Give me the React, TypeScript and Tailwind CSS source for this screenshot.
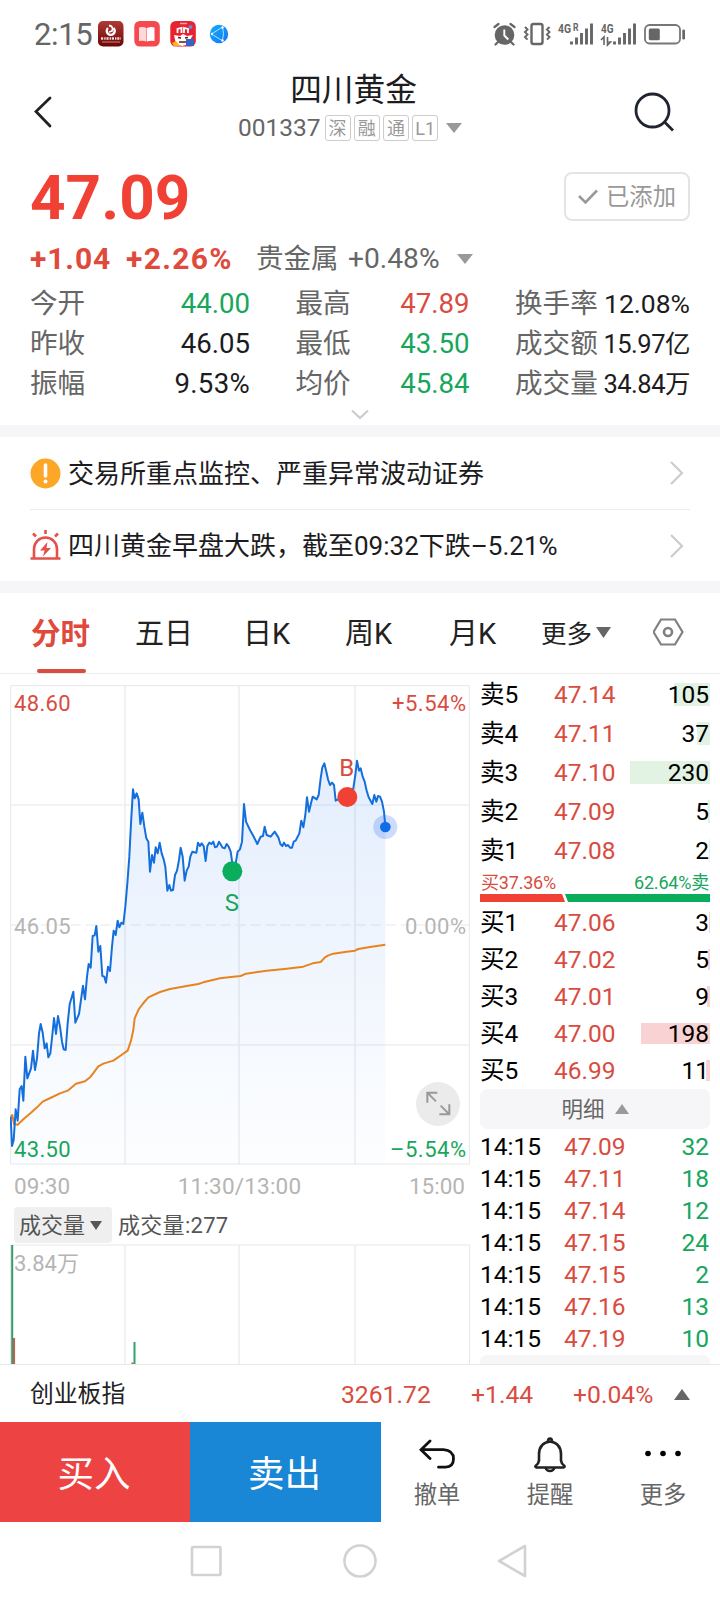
import React from "react";

const quotes = [
  [
    { label: "今开", value: "44.00", color: "text-[#16a65c]" },
    { label: "昨收", value: "46.05", color: "text-[#1c1c1e]" },
    { label: "振幅", value: "9.53%", color: "text-[#1c1c1e] tracking-[0.3px]" },
  ],
  [
    { label: "最高", value: "47.89", color: "text-[#d94c3f]" },
    { label: "最低", value: "43.50", color: "text-[#16a65c]" },
    { label: "均价", value: "45.84", color: "text-[#16a65c]" },
  ],
  [
    { label: "换手率", value: "12.08%", color: "text-[#1c1c1e] text-[26.5px]" },
    { label: "成交额", value: "15.97亿", color: "text-[#1c1c1e] text-[25.5px] tracking-[-0.5px]" },
    { label: "成交量", value: "34.84万", color: "text-[#1c1c1e] text-[25.5px] tracking-[-0.5px]" },
  ],
];

const sells = [
  { label: "卖5", price: "47.14", volume: 105, bar: 36.5 },
  { label: "卖4", price: "47.11", volume: 37, bar: 13 },
  { label: "卖3", price: "47.10", volume: 230, bar: 80 },
  { label: "卖2", price: "47.09", volume: 5, bar: 2 },
  { label: "卖1", price: "47.08", volume: 2, bar: 1 },
];

const buys = [
  { label: "买1", price: "47.06", volume: 3, bar: 1 },
  { label: "买2", price: "47.02", volume: 5, bar: 2 },
  { label: "买3", price: "47.01", volume: 9, bar: 3.5 },
  { label: "买4", price: "47.00", volume: 198, bar: 69 },
  { label: "买5", price: "46.99", volume: 11, bar: 4 },
];

const trades = [
  { time: "14:15", price: "47.09", volume: 32 },
  { time: "14:15", price: "47.11", volume: 18 },
  { time: "14:15", price: "47.14", volume: 12 },
  { time: "14:15", price: "47.15", volume: 24 },
  { time: "14:15", price: "47.15", volume: 2 },
  { time: "14:15", price: "47.16", volume: 13 },
  { time: "14:15", price: "47.19", volume: 10 },
];

const pricePoints =
  "32,1340 36,1428 41,1410 47,1318 53,1352 59,1258 65,1248 70,1292 76,1160 82,1225 93,1195 99,1142 105,1200 111,1165 117,1090 122,1062 128,1088 134,1135 140,1120 145,1162 151,1150 157,1095 162,1044 168,1092 174,1038 180,1070 186,1115 191,1138 197,1140 203,1060 209,1003 220,965 226,1058 237,1032 249,947 255,988 261,920 266,882 272,893 278,798 284,796 289,768 295,845 301,828 307,918 313,920 318,938 324,890 330,903 336,830 341,782 347,795 353,752 358,772 364,758 370,762 376,710 382,640 388,560 393,460 399,358 404,385 410,370 416,388 421,462 427,428 433,470 439,505 445,515 450,605 456,555 462,578 467,532 473,550 479,518 485,550 491,568 496,590 502,662 508,645 513,662 519,660 525,615 531,602 537,570 542,533 548,560 554,632 560,602 566,590 571,560 577,545 589,548 594,518 600,528 605,520 611,528 617,573 622,528 628,518 634,522 640,515 645,532 651,530 657,515 663,525 668,533 674,535 680,522 686,530 692,545 697,580 707,580 713,545 720,538 726,515 732,402 738,455 750,480 760,498 772,522 782,500 789,498 794,470 800,495 812,500 824,485 835,502 841,522 847,528 852,518 858,528 864,525 870,533 876,533 881,515 887,512 898,490 904,452 910,472 916,435 921,382 927,425 933,400 938,380 950,388 956,375 962,325 967,292 973,280 979,305 984,328 990,345 996,338 1002,345 1007,392 1020,385 1042,385 1060,355 1066,315 1071,272 1077,302 1082,295 1088,320 1094,335 1100,362 1106,382 1117,402 1123,375 1129,395 1134,378 1140,380 1146,395 1152,425 1156,470";

const averagePoints =
  "32,1340 37,1335 42,1362 53,1364 70,1348 93,1328 111,1312 128,1295 151,1284 180,1270 203,1262 228,1241 255,1234 272,1220 295,1189 310,1181 340,1172 360,1158 383,1142 393,1112 400,1080 404,1045 416,1018 428,1002 445,982 480,966 510,957 560,948 595,942 610,937 660,925 700,920 722,918 738,911 800,902 860,896 910,890 938,880 962,876 975,862 985,856 1000,851 1040,845 1065,842 1075,837 1110,831 1156,824";

const StatusBar = () => (
  <div className="flex h-[68px] items-center justify-between pl-[34px] pr-[34px]">
    <div className="flex items-center">
      <span className="w-[64px] text-[31px] leading-none tracking-[-0.4px] text-[#666]">2:15</span>
      <svg width="132" height="26" viewBox="98 21 132 26">
        <defs>
          <linearGradient id="appRed" x1="0" y1="0" x2="0" y2="1">
            <stop offset="0" stopColor="#b03a35" />
            <stop offset="1" stopColor="#6d0606" />
          </linearGradient>
          <linearGradient id="globe" x1="0" y1="0" x2="1" y2="1">
            <stop offset="0" stopColor="#12b0fb" />
            <stop offset="1" stopColor="#1971f5" />
          </linearGradient>
        </defs>
        <rect x="98" y="21" width="25.5" height="25.5" rx="5" fill="url(#appRed)" />
        <path d="M108 28a4 4 0 1 0 5.500 0" fill="none" stroke="#fff" strokeWidth="2.4" />
        <path d="M109 25.500q5 1 3 5.500l-3 1" fill="none" stroke="#fff" strokeWidth="1.8" />
        <path d="M101 38.5h20" stroke="#f1d5d3" strokeWidth="2.6" strokeDasharray="2.2 1 1.4 0.8" />
        <path d="M102 42h18" stroke="#d9a5a2" strokeWidth="0.8" />
        <rect x="134.3" y="21" width="25.5" height="25.5" rx="5.5" fill="#f6484f" />
        <path d="M139 27.5q4-1 7.5.6v13.5q-3.5-1.5-7.5-.6z" fill="#fdd9da" />
        <path d="M154.5 27.5q-4-1-7.5.6v13.5q3.5-1.5 7.5-.6z" fill="#fff" />
        <rect x="170.3" y="21" width="25.5" height="25.5" rx="5.5" fill="#e8222f" />
        <path d="M177.5 33v-4l4-1v5M184 33v-5l4 1v4" fill="none" stroke="#fff" strokeWidth="1.8" />
        <path d="M180 23.5h7" stroke="#ff9aa0" strokeWidth="1.5" />
        <path d="M174 35l6 1 3-2 4 2 6-1-3 5v4l-8 2-6-2z" fill="#fff" />
        <path d="M178 37.5l3 .5M185 38l3-.5M179 42h7" stroke="#5b1a12" strokeWidth="1.4" />
        <circle cx="190.5" cy="27" r="2" fill="#5c8fe0" />
        <path d="M172 43l4-2 4 5h-6z" fill="#f7b51e" />
        <rect x="186" y="39" width="8" height="7" fill="#3565c4" />
        <circle cx="219" cy="34" r="9.2" fill="url(#globe)" />
        <path d="M211.5 34l11-7M211.5 34l10.5 6.5M222.5 27q2 7 0 13" fill="none" stroke="#a9e4ff" strokeWidth="1" />
        <circle cx="212" cy="34" r="1.2" fill="#fff" />
        <circle cx="222.5" cy="27.5" r="1.2" fill="#fff" />
        <circle cx="222.5" cy="40.5" r="1.2" fill="#fff" />
      </svg>
    </div>
    <svg width="194" height="28" viewBox="492 20 194 28" fill="#666">
      <circle cx="504.5" cy="35" r="9.8" />
      <path d="M494.5 27l4-3M514.5 27l-4-3M498 42l-2.5 2.5M511 42l2.5 2.5" stroke="#666" strokeWidth="2.2" strokeLinecap="round" />
      <path d="M504.3 29.5v6l4 4" fill="none" stroke="#fff" strokeWidth="1.9" />
      <rect x="531.5" y="24" width="11" height="20" rx="2" fill="none" stroke="#666" strokeWidth="2.4" />
      <path d="M525 27l2.5 2.6-2.5 2.5 2.5 2.5-2.5 2.5 2.5 2.5M549.5 27l-2.5 2.6 2.5 2.5-2.5 2.5 2.5 2.5-2.5 2.5" fill="none" stroke="#666" strokeWidth="2" />
      <text x="558" y="32.5" fontSize="12.5" fontWeight="700" textLength="13" lengthAdjust="spacingAndGlyphs">4G</text>
      <text x="573" y="31" fontSize="10.5" fontWeight="700" textLength="5.5" lengthAdjust="spacingAndGlyphs">R</text>
      <path d="M571.5 41.5v3M576.5 37.5v7M581.5 33v11.5M586.5 28.5v16M591.5 23.5v21" stroke="#666" strokeWidth="2.9" />
      <text x="601" y="32.5" fontSize="12.5" fontWeight="700" textLength="12.5" lengthAdjust="spacingAndGlyphs">4G</text>
      <path d="M601 40l3-3v8M607.5 37v8l3-3h-2" fill="none" stroke="#666" strokeWidth="1.6" />
      <path d="M614.5 41.5v3M619.5 37.5v7M624.5 33v11.5M629.5 28.5v16M634.5 23.5v21" stroke="#666" strokeWidth="2.9" />
      <rect x="645" y="25" width="35" height="18.5" rx="4.5" fill="none" stroke="#777" strokeWidth="1.8" />
      <rect x="648.8" y="28.5" width="11" height="11.8" rx="1.5" />
      <rect x="682.3" y="29.5" width="2.7" height="10" rx="1.2" />
    </svg>
  </div>
);

const Header = () => (
  <div className="flex h-[88px] justify-between">
    <svg width="60" height="88" viewBox="0 68 60 88" fill="none">
      <path d="M50 98L36 111.5 50 126" stroke="#222" strokeWidth="2.8" strokeLinecap="round" />
    </svg>
    <div className="ml-[17px] flex flex-col items-center">
      <div className="h-[45px] text-[31.7px] leading-[46px] text-[#1c1c1e]">四川黄金</div>
      <div className="flex h-[30px] items-center pr-[7px] text-[#666]">
        <span className="mr-[4px] text-[24.5px] leading-[30px]">001337</span>
        <div className="flex gap-[3.2px]">
          {["深", "融", "通", "L1"].map((tag) => (
            <span
              key={tag}
              className="h-[26px] w-[26px] rounded-[3px] border border-[#ccc] text-center text-[18px] leading-[25px] text-[#999]"
            >
              {tag}
            </span>
          ))}
        </div>
        <svg className="ml-[8px]" width="16" height="10">
          <path d="M0 0h16L8 10z" fill="#999" />
        </svg>
      </div>
    </div>
    <svg width="90" height="88" viewBox="630 68 90 88" fill="none" stroke="#1f2430" strokeWidth="2.8">
      <circle cx="652.5" cy="110.5" r="16.5" />
      <path d="M664.5 122l8.5 8.5" />
    </svg>
  </div>
);

const Summary = () => (
  <div className="h-[269px] px-[30px]">
    <div className="flex h-[84px] items-start justify-between">
      <div className="text-[62px] font-bold leading-[84px] text-[#f04134]">47.09</div>
      <div className="mt-4 flex h-[49px] w-[126px] items-center justify-center gap-[8px] rounded-[8px] border-2 border-[#e4e4e4] text-[23.3px] leading-none text-[#999]">
        <svg width="20" height="16" fill="none">
          <path d="M1 7l6.5 6.5L19 1.5" stroke="#999" strokeWidth="2.6" />
        </svg>
        <span className="pt-[2px]">已添加</span>
      </div>
    </div>
    <div className="flex h-[38px] items-center leading-[38px]">
      <span className="w-[96px] text-[30px] font-bold tracking-[0.9px] text-[#e04a3c]">+1.04</span>
      <span className="w-[130px] text-[30px] font-bold tracking-[1.3px] text-[#e04a3c]">+2.26%</span>
      <span className="w-[92px] text-[27.5px] text-[#666]">贵金属</span>
      <span className="w-[109px] text-[28.2px] text-[#666]">+0.48%</span>
      <svg width="16" height="10">
        <path d="M0 0h16L8 10z" fill="#999" />
      </svg>
    </div>
    <div className="mt-[5px] flex justify-between">
      {quotes.map((column, i) => (
        <div key={i} className={["w-[220px]", "w-[174px]", "w-[175px]"][i]}>
          {column.map((item) => (
            <div key={item.label} className="flex h-10 items-center justify-between text-[27.6px] leading-[40px]">
              <span className="pt-[2px] text-[#666]">{item.label}</span>
              <span className={"pt-[2px] " + item.color}>{item.value}</span>
            </div>
          ))}
        </div>
      ))}
    </div>
    <svg className="mx-auto mt-[6px]" width="18" height="11" fill="none">
      <path d="M1 1.5l8 7.5 8-7.5" stroke="#ccc" strokeWidth="2.2" />
    </svg>
  </div>
);

const Arrow = () => (
  <svg className="ml-auto mr-[6px]" width="15" height="26" fill="none">
    <path d="M2 2l11 11L2 24" stroke="#ccc" strokeWidth="2.2" />
  </svg>
);

const Notices = () => (
  <div className="px-[30px] text-[26px] text-[#1c1c1e]">
    <div className="flex h-[73px] items-center border-b border-[#ededed]">
      <svg className="mr-[7px]" width="31" height="31">
        <circle cx="15.5" cy="15.5" r="15" fill="#fca728" />
        <path d="M15.5 7v11" stroke="#fff" strokeWidth="3.6" strokeLinecap="round" />
        <circle cx="15.5" cy="23.5" r="2" fill="#fff" />
      </svg>
      <span className="pt-[2px]">交易所重点监控、严重异常波动证券</span>
      <Arrow />
    </div>
    <div className="flex h-[71px] items-center">
      <svg className="mr-[7px]" width="31" height="31" fill="none" stroke="#e5504c" strokeWidth="2.6">
        <path d="M0.5 28.5h30M4 28V19a11.5 11.5 0 0 1 23 0v9" />
        <path d="M15.5 0v4M3 3.5l3 3M28 3.5l-3 3" />
        <path d="M17.5 12l-7.5 8.5h4.5l-1.5 6 8-8.5h-4.5z" fill="#e5504c" stroke="none" />
      </svg>
      <span className="pt-[2px]">四川黄金早盘大跌，截至09:32下跌–5.21%</span>
      <Arrow />
    </div>
  </div>
);

const Tabs = () => (
  <div className="flex h-[81px] border-b border-[#ececec] pl-[31px] text-[29px] leading-[82px] text-[#222]">
    <div className="flex w-[104px] flex-col font-bold text-[#e04a3c]">
      <span className="h-[76px] text-[29.5px]">分时</span>
      <span className="ml-[6px] h-[4px] w-[49px] rounded-full bg-[#d94c3f]" />
    </div>
    <span className="w-[108px]">五日</span>
    <span className="w-[102px]">日K</span>
    <span className="w-[104px]">周K</span>
    <span className="w-[92px]">月K</span>
    <span className="w-[55px] text-[25.5px]">更多</span>
    <svg width="16" height="78" className="mr-[41px]">
      <path d="M0 34h15L7.5 45z" fill="#666" />
    </svg>
    <svg width="32" height="78" fill="none" stroke="#808080" strokeWidth="2.2">
      <path d="M8 26.5h14L29.5 39l-7.5 12.5H8L0.5 39z" />
      <circle cx="15" cy="39" r="4" strokeWidth="2.6" />
    </svg>
  </div>
);

// three chart units per css pixel
const PriceChart = () => (
  <svg className="ml-[10px] mt-[11px]" width="462" height="480" viewBox="30 45 1386 1440">
    <defs>
      <linearGradient id="area" gradientUnits="userSpaceOnUse" x1="0" y1="270" x2="0" y2="1480">
        <stop offset="0" stopColor="#1a70f0" stopOpacity="0.12" />
        <stop offset="1" stopColor="#1a70f0" stopOpacity="0.01" />
      </linearGradient>
    </defs>
    <g stroke="#efeff0" strokeWidth="5" fill="none">
      <path d="M32 405h1376M32 1125h1376M375 47v1436M717 47v1436M1065 47v1436" />
      <path d="M32 765h1376" strokeDasharray="30 15" />
      <rect x="32" y="47" width="1376" height="1435" strokeWidth="3" stroke="#e8e8ea" />
    </g>
    <polygon points={`32,1482 ${pricePoints} 1156,1482`} fill="url(#area)" />
    <polyline points={averagePoints} fill="none" stroke="#e8841f" strokeWidth="6" strokeLinejoin="round" />
    <polyline points={pricePoints} fill="none" stroke="#146fdc" strokeWidth="6" strokeLinejoin="round" />
    <circle cx="697" cy="604" r="30" fill="#0aad5c" />
    <circle cx="1042" cy="381" r="30" fill="#f04134" />
    <circle cx="1156" cy="471" r="36" fill="#1a5ff0" fillOpacity="0.22" />
    <circle cx="1156" cy="471" r="16" fill="#0f6de6" />
    <circle cx="1314" cy="1302" r="66" fill="#ebebeb" />
    <path d="M1282 1298v-30h30M1282 1268l26 26M1318 1333h30v-30M1348 1333l-26-26" fill="none" stroke="#999" strokeWidth="6" />
    <g fontSize="66" letterSpacing="1">
      <text x="42" y="123" fill="#d94c3f">48.60</text>
      <text x="42" y="792" fill="#b5b5b5">46.05</text>
      <text x="42" y="1461" fill="#16a65c">43.50</text>
      <g textAnchor="end" letterSpacing="1.6">
        <text x="1400" y="123" fill="#d94c3f">+5.54%</text>
        <text x="1400" y="792" fill="#b5b5b5">0.00%</text>
        <text x="1400" y="1461" fill="#16a65c">–5.54%</text>
      </g>
      <g textAnchor="middle" fontSize="72">
        <text x="1041" y="318" fill="#d94c3f">B</text>
        <text x="696" y="722" fill="#16a65c">S</text>
      </g>
    </g>
  </svg>
);

const VolumeChart = () => (
  <svg className="ml-[10px] mt-[1px]" width="462" height="120" viewBox="10 1244 462 120">
    <path d="M10.5 1245h459M125 1245v119M239 1245v119M355 1245v119" stroke="#efeff0" strokeWidth="1.7" />
    <path d="M10.5 1245v119M469.5 1245v119" stroke="#e8e8ea" />
    <path d="M12.2 1245v119" stroke="#2f9e69" strokeWidth="2" />
    <path d="M14 1338v26M132.5 1362.5v1.5" stroke="#b96450" strokeWidth="2.2" />
    <path d="M134.5 1342v22" stroke="#2fa56c" strokeWidth="2" />
    <text x="14" y="1271" fontSize="22" fill="#b5b5b5">3.84万</text>
  </svg>
);

type Level = { label: string; price: string; volume: number; bar: number };

const Levels = ({ rows, rowClass, barClass }: { rows: Level[]; rowClass: string; barClass: string }) => (
  <>
    {rows.map((row) => (
      <div key={row.label} className={"relative flex items-center pt-[2px] text-[24.5px] leading-none " + rowClass}>
        <span className={"absolute inset-y-2 right-0 " + barClass} style={{ width: row.bar }} />
        <span className="w-[74px]">{row.label}</span>
        <span className="text-[#d94c3f]">{row.price}</span>
        <span className="relative ml-auto pr-px">{row.volume}</span>
      </div>
    ))}
  </>
);

const OrderBook = () => (
  <div className="w-[230px] text-black">
    <div className="pt-px">
      <Levels rows={sells} rowClass="h-[39px]" barClass="bg-[#e2f3e4]" />
    </div>
    <div className="flex h-[24px] items-center justify-between px-px pt-[2px] text-[18px] leading-none">
      <span className="tracking-[-0.2px] text-[#d94c3f]">买37.36%</span>
      <span className="tracking-[-0.2px] text-[#16a65c]">62.64%卖</span>
    </div>
    <svg width="230" height="8">
      <path d="M0 0h82l3 8H0z" fill="#f04134" />
      <path d="M85 0h145v8H88z" fill="#0aad5c" />
    </svg>
    <div className="pt-[2px]">
      <Levels rows={buys} rowClass="h-[37px]" barClass="bg-[#f9d3d3]" />
    </div>
    <div className="flex h-10 items-center justify-center gap-[10px] rounded-[7px] bg-[#f6f6f8] text-[21.5px] leading-none text-[#666]">
      <span className="pt-[2px]">明细</span>
      <svg width="14" height="10">
        <path d="M0 10h14L7 0z" fill="#999" />
      </svg>
    </div>
    <div className="mt-[2px] text-[24.5px] leading-none">
      {trades.map((trade, i) => (
        <div key={i} className="flex h-8 items-center">
          <span className="w-[84px]">{trade.time}</span>
          <span className="text-[#d94c3f]">{trade.price}</span>
          <span className="ml-auto pr-px text-[#16a65c]">{trade.volume}</span>
        </div>
      ))}
    </div>
    <div className="h-[40px] rounded-[7px] bg-[#f6f6f8]" />
  </div>
);

const Toolbar = () => (
  <div className="flex h-[100px] text-[23.3px] text-[#666]">
    <div className="w-[190px] bg-[#ee4343] pr-[2px] text-center text-[36.5px] leading-[105px] text-white">买入</div>
    <div className="w-[191px] bg-[#1a86d6] pr-[2px] text-center text-[36.5px] leading-[105px] text-white">卖出</div>
    <div className="flex w-[112px] flex-col items-center pt-[14px]">
      <svg width="36" height="38" viewBox="419 1436 36 38" fill="none" stroke="#111" strokeWidth="2.8" strokeLinecap="round">
        <path d="M430 1441l-9 8.7 9 8.8M421.5 1449.7h22q10 1 10 9t-8 8.5h-7" />
      </svg>
      <span className="mt-[4px] leading-[34px]">撤单</span>
    </div>
    <div className="flex w-[114px] flex-col items-center pt-[14px]">
      <svg width="36" height="38" viewBox="532 1436 36 38" fill="none" stroke="#222" strokeWidth="2.6" strokeLinejoin="round">
        <path d="M550 1441.5q-11 1.5-11 13v6q-.5 3.5-3 5-1.5 1.5.5 2h27q2-.5.5-2-2.5-1.5-3-5v-6q0-11.5-11-13z" />
        <path d="M548 1441.5q0-3 2-3t2 3M545.5 1467.5q1 3.5 4.5 3.5t4.5-3.5" />
      </svg>
      <span className="mt-[4px] leading-[34px]">提醒</span>
    </div>
    <div className="flex w-[112px] flex-col items-center pt-[14px]">
      <svg width="40" height="38" fill="#000">
        <circle cx="5" cy="17.5" r="2.8" />
        <circle cx="20" cy="17.5" r="2.8" />
        <circle cx="35" cy="17.5" r="2.8" />
      </svg>
      <span className="mt-[4px] leading-[34px]">更多</span>
    </div>
  </div>
);

const App = () => {
  return (
    <div className="h-[1600px] w-[720px] overflow-hidden bg-white font-['Roboto','Noto_Sans_CJK_SC',sans-serif]">
      <StatusBar />
      <Header />
      <Summary />
      <div className="h-3 bg-[#f6f6f9]" />
      <Notices />
      <div className="h-3 bg-[#f6f6f9]" />
      <Tabs />
      <div className="flex h-[690px] overflow-hidden">
        <div className="w-[480px]">
          <PriceChart />
          <div className="flex h-[42px] items-center justify-between pl-[14px] pr-[15px] text-[22.5px] leading-none text-[#b5b5b5]">
            <span>09:30</span>
            <span className="tracking-[0.2px]">11:30/13:00</span>
            <span>15:00</span>
          </div>
          <div className="flex h-[36px] items-center pl-[14px] text-[22px] leading-none text-[#555]">
            <div className="mr-[6px] flex h-[36px] w-[98px] items-center gap-[5px] rounded-[4px] bg-[#efefef] pl-[5px]">
              <span className="pt-[2px]">成交量</span>
              <svg width="12" height="9">
                <path d="M0 0h12L6 9z" fill="#555" />
              </svg>
            </div>
            <span className="pt-[2px] tracking-[0.3px]">成交量:277</span>
          </div>
          <VolumeChart />
        </div>
        <OrderBook />
      </div>
      <div className="flex h-[58px] items-center border-t border-[#e8e8e8] pl-[30px] pt-[2px] text-[24.7px] text-[#d94c3f]">
        <span className="w-[311px] text-[23.8px] text-[#222]">创业板指</span>
        <span className="w-[130px]">3261.72</span>
        <span className="w-[102px]">+1.44</span>
        <span className="w-[101px]">+0.04%</span>
        <svg width="16" height="12">
          <path d="M0 11h16L8 0z" fill="#666" />
        </svg>
      </div>
      <Toolbar />
      <svg width="720" height="78" viewBox="0 1522 720 78" fill="none" stroke="#d2d2d2" strokeWidth="2.6" strokeLinejoin="round">
        <rect x="192" y="1547" width="28.5" height="28" rx="1" />
        <circle cx="360" cy="1561" r="15.5" />
        <path d="M525 1546v30l-26-15z" />
      </svg>
    </div>
  );
};

export default App;
